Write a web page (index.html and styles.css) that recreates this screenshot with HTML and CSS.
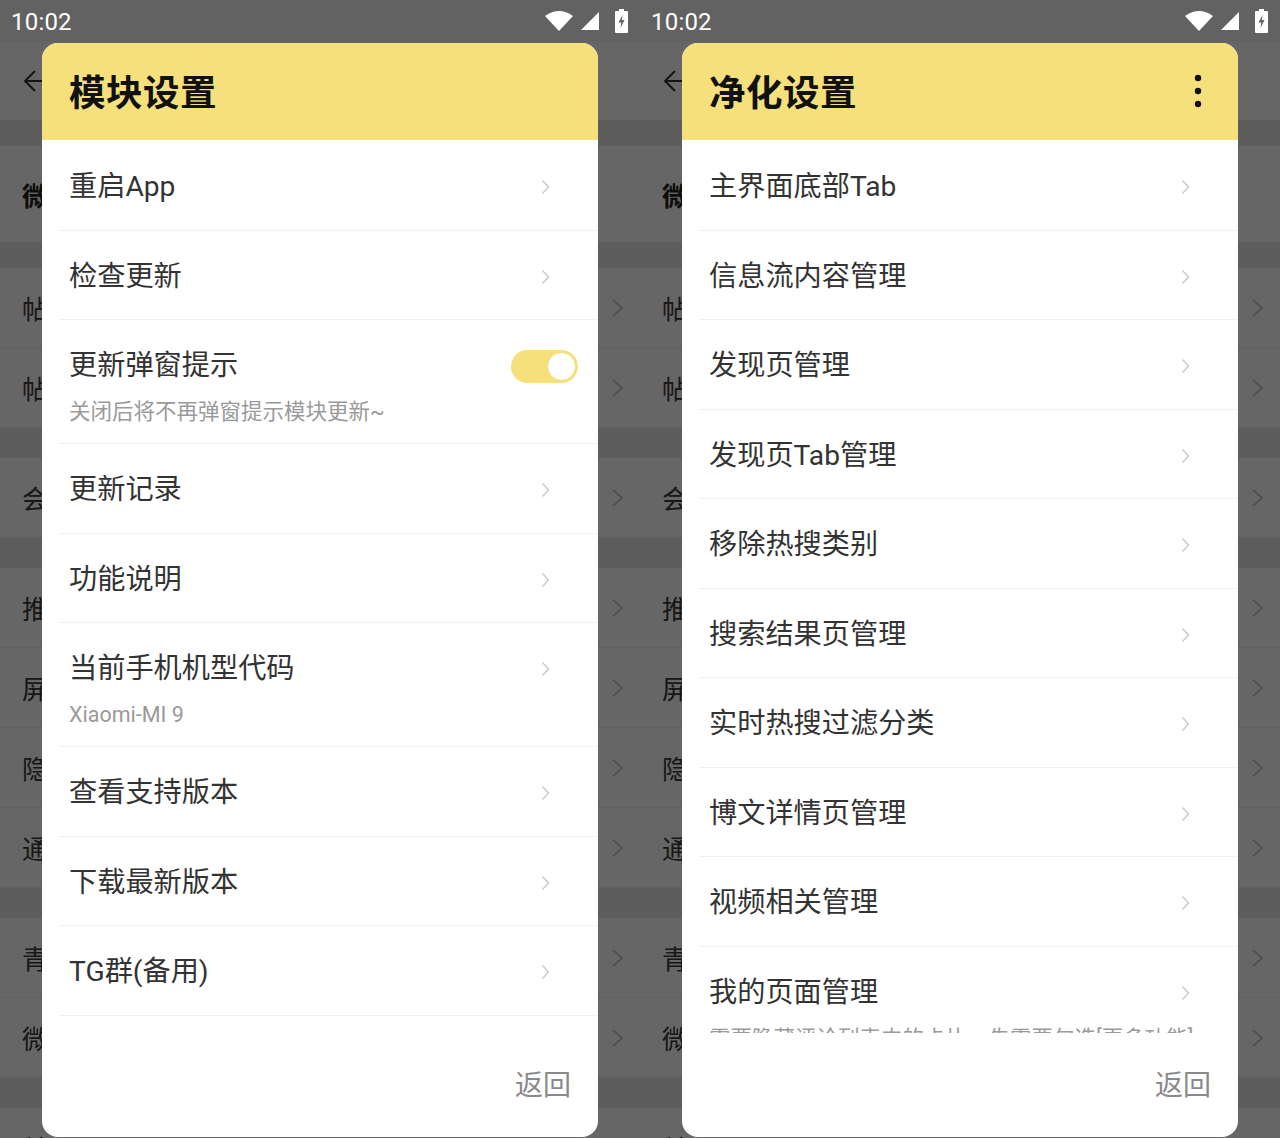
FILE: index.html
```html
<!DOCTYPE html>
<html lang="zh-CN">
<head>
<meta charset="utf-8">
<title>设置</title>
<link rel="stylesheet" href="styles.css">
</head>
<body>
<div class="screens">

  <!-- LEFT PHONE -->
  <div class="phone">
    <div class="statusbar">
      <span class="time">10:02</span>
      <span class="sb-icons">
        <svg width="28" height="20" viewBox="0 0 28 20"><path d="M0 5 Q14 -5 28 5 L14 20 Z" fill="#fff"/></svg>
        <svg width="20" height="20" viewBox="0 0 20 20"><path d="M19 1 L19 19 L1 19 Z" fill="#fff"/></svg>
        <svg class="batt" width="13" height="24" viewBox="0 0 13 24"><rect x="4" y="0" width="5" height="3" fill="#fff"/><rect x="0" y="2" width="13" height="22" rx="1" fill="#fff"/><path d="M7.5 6 L3.5 13.5 L6.3 13.5 L5.5 19 L9.5 11 L6.8 11 Z" fill="#626262"/></svg>
      </span>
    </div>
    <div class="app">
      <div class="toolbar">
        <svg width="26" height="26" viewBox="0 0 26 26"><path d="M24 13 H3 M13 3 L3 13 L13 23" fill="none" stroke="#333" stroke-width="2"/></svg>
      </div>
      <div class="gap"></div>
      <div class="bgrow head"><span>微博版本：13.1.2</span></div>
      <div class="gap"></div>
      <div class="bgrow"><span>帖子页面设置</span><svg class="bgchev" width="11" height="18" viewBox="0 0 11 18"><path d="M1 1 L10 9 L1 17" fill="none" stroke="#bbb" stroke-width="1.6"/></svg></div>
      <div class="bgrow"><span>帖子评论设置</span><svg class="bgchev" width="11" height="18" viewBox="0 0 11 18"><path d="M1 1 L10 9 L1 17" fill="none" stroke="#bbb" stroke-width="1.6"/></svg></div>
      <div class="gap g2"></div>
      <div class="bgrow"><span>会员相关设置</span><svg class="bgchev" width="11" height="18" viewBox="0 0 11 18"><path d="M1 1 L10 9 L1 17" fill="none" stroke="#bbb" stroke-width="1.6"/></svg></div>
      <div class="gap g2"></div>
      <div class="bgrow"><span>推荐内容设置</span><svg class="bgchev" width="11" height="18" viewBox="0 0 11 18"><path d="M1 1 L10 9 L1 17" fill="none" stroke="#bbb" stroke-width="1.6"/></svg></div>
      <div class="bgrow"><span>屏蔽设置</span><svg class="bgchev" width="11" height="18" viewBox="0 0 11 18"><path d="M1 1 L10 9 L1 17" fill="none" stroke="#bbb" stroke-width="1.6"/></svg></div>
      <div class="bgrow"><span>隐私设置</span><svg class="bgchev" width="11" height="18" viewBox="0 0 11 18"><path d="M1 1 L10 9 L1 17" fill="none" stroke="#bbb" stroke-width="1.6"/></svg></div>
      <div class="bgrow"><span>通用设置</span><svg class="bgchev" width="11" height="18" viewBox="0 0 11 18"><path d="M1 1 L10 9 L1 17" fill="none" stroke="#bbb" stroke-width="1.6"/></svg></div>
      <div class="gap g2"></div>
      <div class="bgrow"><span>青少年模式</span><svg class="bgchev" width="11" height="18" viewBox="0 0 11 18"><path d="M1 1 L10 9 L1 17" fill="none" stroke="#bbb" stroke-width="1.6"/></svg></div>
      <div class="bgrow"><span>微博热搜设置</span><svg class="bgchev" width="11" height="18" viewBox="0 0 11 18"><path d="M1 1 L10 9 L1 17" fill="none" stroke="#bbb" stroke-width="1.6"/></svg></div>
      <div class="gap g2"></div>
      <div class="bgrow"><span>关于</span></div>
    </div>
    <div class="scrim"></div>

    <div class="dialog">
      <div class="dlg-head"><span class="dlg-title">模块设置</span></div>
      <div class="dlg-list">
        <div class="item"><div class="item-main"><span class="item-title">重启App</span><svg class="chev" width="9" height="16" viewBox="0 0 9 16"><path d="M1.5 1.5 L7.5 8 L1.5 14.5" fill="none" stroke="#c9c9c9" stroke-width="1.4"/></svg></div></div>
        <div class="item"><div class="item-main"><span class="item-title">检查更新</span><svg class="chev" width="9" height="16" viewBox="0 0 9 16"><path d="M1.5 1.5 L7.5 8 L1.5 14.5" fill="none" stroke="#c9c9c9" stroke-width="1.4"/></svg></div></div>
        <div class="item has-sub"><div class="item-main"><span class="item-title">更新弹窗提示</span><span class="toggle"><span class="knob"></span></span></div><div class="item-sub">关闭后将不再弹窗提示模块更新~</div></div>
        <div class="item"><div class="item-main"><span class="item-title">更新记录</span><svg class="chev" width="9" height="16" viewBox="0 0 9 16"><path d="M1.5 1.5 L7.5 8 L1.5 14.5" fill="none" stroke="#c9c9c9" stroke-width="1.4"/></svg></div></div>
        <div class="item"><div class="item-main"><span class="item-title">功能说明</span><svg class="chev" width="9" height="16" viewBox="0 0 9 16"><path d="M1.5 1.5 L7.5 8 L1.5 14.5" fill="none" stroke="#c9c9c9" stroke-width="1.4"/></svg></div></div>
        <div class="item has-sub"><div class="item-main"><span class="item-title">当前手机机型代码</span><svg class="chev" width="9" height="16" viewBox="0 0 9 16"><path d="M1.5 1.5 L7.5 8 L1.5 14.5" fill="none" stroke="#c9c9c9" stroke-width="1.4"/></svg></div><div class="item-sub">Xiaomi-MI 9</div></div>
        <div class="item"><div class="item-main"><span class="item-title">查看支持版本</span><svg class="chev" width="9" height="16" viewBox="0 0 9 16"><path d="M1.5 1.5 L7.5 8 L1.5 14.5" fill="none" stroke="#c9c9c9" stroke-width="1.4"/></svg></div></div>
        <div class="item"><div class="item-main"><span class="item-title">下载最新版本</span><svg class="chev" width="9" height="16" viewBox="0 0 9 16"><path d="M1.5 1.5 L7.5 8 L1.5 14.5" fill="none" stroke="#c9c9c9" stroke-width="1.4"/></svg></div></div>
        <div class="item"><div class="item-main"><span class="item-title">TG群(备用)</span><svg class="chev" width="9" height="16" viewBox="0 0 9 16"><path d="M1.5 1.5 L7.5 8 L1.5 14.5" fill="none" stroke="#c9c9c9" stroke-width="1.4"/></svg></div></div>
      </div>
      <div class="dlg-foot"><span class="btn-back">返回</span></div>
    </div>
  </div>

  <!-- RIGHT PHONE -->
  <div class="phone">
    <div class="statusbar">
      <span class="time">10:02</span>
      <span class="sb-icons">
        <svg width="28" height="20" viewBox="0 0 28 20"><path d="M0 5 Q14 -5 28 5 L14 20 Z" fill="#fff"/></svg>
        <svg width="20" height="20" viewBox="0 0 20 20"><path d="M19 1 L19 19 L1 19 Z" fill="#fff"/></svg>
        <svg class="batt" width="13" height="24" viewBox="0 0 13 24"><rect x="4" y="0" width="5" height="3" fill="#fff"/><rect x="0" y="2" width="13" height="22" rx="1" fill="#fff"/><path d="M7.5 6 L3.5 13.5 L6.3 13.5 L5.5 19 L9.5 11 L6.8 11 Z" fill="#626262"/></svg>
      </span>
    </div>
    <div class="app">
      <div class="toolbar">
        <svg width="26" height="26" viewBox="0 0 26 26"><path d="M24 13 H3 M13 3 L3 13 L13 23" fill="none" stroke="#333" stroke-width="2"/></svg>
      </div>
      <div class="gap"></div>
      <div class="bgrow head"><span>微博版本：13.1.2</span></div>
      <div class="gap"></div>
      <div class="bgrow"><span>帖子页面设置</span><svg class="bgchev" width="11" height="18" viewBox="0 0 11 18"><path d="M1 1 L10 9 L1 17" fill="none" stroke="#bbb" stroke-width="1.6"/></svg></div>
      <div class="bgrow"><span>帖子评论设置</span><svg class="bgchev" width="11" height="18" viewBox="0 0 11 18"><path d="M1 1 L10 9 L1 17" fill="none" stroke="#bbb" stroke-width="1.6"/></svg></div>
      <div class="gap g2"></div>
      <div class="bgrow"><span>会员相关设置</span><svg class="bgchev" width="11" height="18" viewBox="0 0 11 18"><path d="M1 1 L10 9 L1 17" fill="none" stroke="#bbb" stroke-width="1.6"/></svg></div>
      <div class="gap g2"></div>
      <div class="bgrow"><span>推荐内容设置</span><svg class="bgchev" width="11" height="18" viewBox="0 0 11 18"><path d="M1 1 L10 9 L1 17" fill="none" stroke="#bbb" stroke-width="1.6"/></svg></div>
      <div class="bgrow"><span>屏蔽设置</span><svg class="bgchev" width="11" height="18" viewBox="0 0 11 18"><path d="M1 1 L10 9 L1 17" fill="none" stroke="#bbb" stroke-width="1.6"/></svg></div>
      <div class="bgrow"><span>隐私设置</span><svg class="bgchev" width="11" height="18" viewBox="0 0 11 18"><path d="M1 1 L10 9 L1 17" fill="none" stroke="#bbb" stroke-width="1.6"/></svg></div>
      <div class="bgrow"><span>通用设置</span><svg class="bgchev" width="11" height="18" viewBox="0 0 11 18"><path d="M1 1 L10 9 L1 17" fill="none" stroke="#bbb" stroke-width="1.6"/></svg></div>
      <div class="gap g2"></div>
      <div class="bgrow"><span>青少年模式</span><svg class="bgchev" width="11" height="18" viewBox="0 0 11 18"><path d="M1 1 L10 9 L1 17" fill="none" stroke="#bbb" stroke-width="1.6"/></svg></div>
      <div class="bgrow"><span>微博热搜设置</span><svg class="bgchev" width="11" height="18" viewBox="0 0 11 18"><path d="M1 1 L10 9 L1 17" fill="none" stroke="#bbb" stroke-width="1.6"/></svg></div>
      <div class="gap g2"></div>
      <div class="bgrow"><span>关于</span></div>
    </div>
    <div class="scrim"></div>

    <div class="dialog">
      <div class="dlg-head">
        <span class="dlg-title">净化设置</span>
        <svg class="more" width="8" height="34" viewBox="0 0 8 34"><circle cx="4" cy="4" r="3.2" fill="#111"/><circle cx="4" cy="17" r="3.2" fill="#111"/><circle cx="4" cy="30" r="3.2" fill="#111"/></svg>
      </div>
      <div class="dlg-list">
        <div class="item"><div class="item-main"><span class="item-title">主界面底部Tab</span><svg class="chev" width="9" height="16" viewBox="0 0 9 16"><path d="M1.5 1.5 L7.5 8 L1.5 14.5" fill="none" stroke="#c9c9c9" stroke-width="1.4"/></svg></div></div>
        <div class="item"><div class="item-main"><span class="item-title">信息流内容管理</span><svg class="chev" width="9" height="16" viewBox="0 0 9 16"><path d="M1.5 1.5 L7.5 8 L1.5 14.5" fill="none" stroke="#c9c9c9" stroke-width="1.4"/></svg></div></div>
        <div class="item"><div class="item-main"><span class="item-title">发现页管理</span><svg class="chev" width="9" height="16" viewBox="0 0 9 16"><path d="M1.5 1.5 L7.5 8 L1.5 14.5" fill="none" stroke="#c9c9c9" stroke-width="1.4"/></svg></div></div>
        <div class="item"><div class="item-main"><span class="item-title">发现页Tab管理</span><svg class="chev" width="9" height="16" viewBox="0 0 9 16"><path d="M1.5 1.5 L7.5 8 L1.5 14.5" fill="none" stroke="#c9c9c9" stroke-width="1.4"/></svg></div></div>
        <div class="item"><div class="item-main"><span class="item-title">移除热搜类别</span><svg class="chev" width="9" height="16" viewBox="0 0 9 16"><path d="M1.5 1.5 L7.5 8 L1.5 14.5" fill="none" stroke="#c9c9c9" stroke-width="1.4"/></svg></div></div>
        <div class="item"><div class="item-main"><span class="item-title">搜索结果页管理</span><svg class="chev" width="9" height="16" viewBox="0 0 9 16"><path d="M1.5 1.5 L7.5 8 L1.5 14.5" fill="none" stroke="#c9c9c9" stroke-width="1.4"/></svg></div></div>
        <div class="item"><div class="item-main"><span class="item-title">实时热搜过滤分类</span><svg class="chev" width="9" height="16" viewBox="0 0 9 16"><path d="M1.5 1.5 L7.5 8 L1.5 14.5" fill="none" stroke="#c9c9c9" stroke-width="1.4"/></svg></div></div>
        <div class="item"><div class="item-main"><span class="item-title">博文详情页管理</span><svg class="chev" width="9" height="16" viewBox="0 0 9 16"><path d="M1.5 1.5 L7.5 8 L1.5 14.5" fill="none" stroke="#c9c9c9" stroke-width="1.4"/></svg></div></div>
        <div class="item"><div class="item-main"><span class="item-title">视频相关管理</span><svg class="chev" width="9" height="16" viewBox="0 0 9 16"><path d="M1.5 1.5 L7.5 8 L1.5 14.5" fill="none" stroke="#c9c9c9" stroke-width="1.4"/></svg></div></div>
        <div class="item has-sub"><div class="item-main"><span class="item-title">我的页面管理</span><svg class="chev" width="9" height="16" viewBox="0 0 9 16"><path d="M1.5 1.5 L7.5 8 L1.5 14.5" fill="none" stroke="#c9c9c9" stroke-width="1.4"/></svg></div><div class="item-sub">需要隐藏评论列表中的卡片，先需要勾选[更多功能]</div></div>
      </div>
      <div class="dlg-foot"><span class="btn-back">返回</span></div>
    </div>
  </div>

</div>
</body>
</html>
```

FILE: styles.css
```css
* { box-sizing: border-box; }

html, body {
  margin: 0;
  padding: 0;
  background: #666;
}

.screens {
  display: flex;
  width: 1280px;
  height: 1138px;
}

.phone {
  position: relative;
  width: 640px;
  height: 1138px;
  overflow: hidden;
  background: #fff;
  font-family: Roboto, "Noto Sans CJK SC", "Noto Sans", sans-serif;
}

/* status bar (drawn above the scrim) */
.statusbar {
  position: relative;
  z-index: 2;
  height: 42px;
  background: #626262;
  display: flex;
  align-items: center;
  justify-content: space-between;
  padding: 0 12px 0 11px;
  color: #fff;
}
.time {
  font-size: 24px;
  letter-spacing: 0.2px;
  line-height: 1;
  margin-top: 2px;
}
.sb-icons {
  display: flex;
  align-items: center;
  gap: 7px;
}
.sb-icons .batt { margin-left: 8px; }

/* background app page */
.app {
  display: flex;
  flex-direction: column;
}
.toolbar {
  height: 78px;
  background: #fff;
  display: flex;
  align-items: center;
  padding-left: 22px;
}
.gap {
  height: 26px;
  background: #e9e9e9;
}
.gap.g2 { height: 30px; }
.bgrow {
  height: 80px;
  background: #fff;
  display: flex;
  align-items: center;
  justify-content: space-between;
  padding: 0 17px 0 22px;
  border-bottom: 1px solid #f1f1f1;
  font-size: 26px;
  color: #3a3a3a;
}
.bgrow.head {
  height: 96px;
  font-weight: 700;
  color: #222;
  border-bottom: none;
}

.scrim {
  position: absolute;
  inset: 0;
  z-index: 1;
  background: rgba(0, 0, 0, 0.6);
}

/* dialog */
.dialog {
  position: absolute;
  z-index: 3;
  left: 42px;
  top: 43px;
  width: 556px;
  height: 1094px;
  background: #fff;
  border-radius: 16px;
  overflow: hidden;
  display: flex;
  flex-direction: column;
}
.dlg-head {
  height: 97px;
  flex: none;
  background: #f5e07c;
  display: flex;
  align-items: center;
  justify-content: space-between;
  padding: 0 36px 3px 27px;
}
.dlg-title {
  font-size: 36.5px;
  font-weight: 700;
  color: #111;
  letter-spacing: 0.5px;
}
.more { display: block; margin-top: 2px; }

.dlg-list {
  height: 893px;
  flex: none;
  overflow: hidden;
  padding-top: 1px;
}
.item {
  margin-left: 17px;
  padding: 28px 0 24.5px 10px;
  border-bottom: 1px solid #f0f0f0;
}
.item.has-sub { padding-bottom: 17px; }
.item-main {
  height: 36px;
  display: flex;
  align-items: center;
  justify-content: space-between;
}
.item-title {
  font-size: 28.2px;
  line-height: 36px;
  color: #333;
}
.chev {
  display: block;
  margin-right: 48px;
}
.item-sub {
  margin-top: 14px;
  font-size: 21.5px;
  line-height: 28px;
  color: #9a9a9a;
  white-space: nowrap;
}

.toggle {
  width: 67px;
  height: 33px;
  border-radius: 17px;
  background: #f5e07c;
  margin-right: 20px;
  display: flex;
  align-items: center;
  justify-content: flex-end;
  padding-right: 2px;
}
.knob {
  width: 29px;
  height: 29px;
  border-radius: 50%;
  background: #fff;
  border: 1px solid #f0dc7a;
}

.dlg-foot {
  flex: 1;
  display: flex;
  align-items: center;
  justify-content: flex-end;
  padding: 0 27px 4px 0;
}
.btn-back {
  font-size: 28px;
  color: #8a8a8a;
}
```
